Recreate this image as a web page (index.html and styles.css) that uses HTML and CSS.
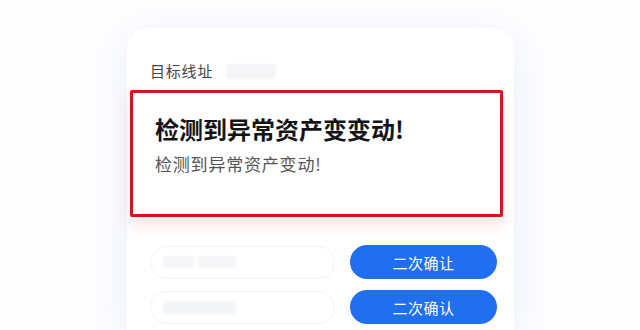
FILE: index.html
```html
<!DOCTYPE html>
<html lang="zh-CN">
<head>
    <meta charset="UTF-8">
    <meta name="viewport" content="width=device-width, initial-scale=1.0">
    <title>异常资产变动</title>
    <link rel="stylesheet" href="styles.css">
</head>
<body>
  <div class="page">
    <div class="card">
      <div class="field">
        <span class="field-label">目标线址</span>
        <span class="mask mask-label"></span>
      </div>

      <div class="alert">
        <h2 class="alert-title">检测到异常资产变变动!</h2>
        <p class="alert-text">检测到异常资产变动!</p>
      </div>

      <div class="rows">
        <div class="row">
          <div class="pill">
            <span class="mask mask-a"></span>
            <span class="mask mask-b"></span>
          </div>
          <button class="btn">二次确让</button>
        </div>
        <div class="row">
          <div class="pill">
            <span class="mask mask-c"></span>
          </div>
          <button class="btn">二次确认</button>
        </div>
      </div>
    </div>
  </div>
</body>
</html>
```

FILE: styles.css
```css
body {
  margin: 0;
  background: #fdfdff;
  font-family: "Noto Sans CJK SC", "Noto Sans", sans-serif;
  overflow: hidden;
}

.page {
  height: 330px;
  padding-top: 28px;
  box-sizing: border-box;
}

.card {
  margin-left: 127px;
  width: 387px;
  height: 302px;
  box-sizing: border-box;
  padding: 32px 0 0 0;
  background: #fff;
  border-radius: 20px 20px 0 0;
  box-shadow: 0 10px 36px rgba(40, 90, 210, 0.09);
}

.field {
  display: flex;
  align-items: center;
  height: 22px;
  padding-left: 23px;
}

.field-label {
  font-size: 15px;
  line-height: 22px;
  letter-spacing: 0.8px;
  color: #454545;
}

.mask {
  display: block;
  background: #f4f5f7;
  border-radius: 3px;
  filter: blur(0.8px);
}

.mask-label {
  width: 50px;
  height: 15px;
  margin-left: 13px;
}

.alert {
  margin: 8px 0 0 3px;
  width: 373px;
  height: 127px;
  box-sizing: border-box;
  padding: 20px 22px 0;
  background: #fff;
  border: 3px solid #d3151d;
  border-radius: 2px;
  box-shadow: 0 8px 18px rgba(220, 50, 50, 0.13);
}

.alert-title {
  margin: 0;
  font-size: 24px;
  line-height: 32px;
  font-weight: 700;
  color: #141414;
}

.alert-text {
  margin: 7px 0 0;
  font-size: 17px;
  line-height: 24px;
  letter-spacing: 0.8px;
  color: #555;
}

.rows {
  display: flex;
  flex-direction: column;
  gap: 11px;
  margin-top: 28px;
  padding-left: 23px;
}

.row {
  display: flex;
  align-items: center;
  gap: 15px;
}

.pill {
  display: flex;
  align-items: center;
  gap: 4px;
  width: 185px;
  height: 33px;
  box-sizing: border-box;
  padding-left: 12px;
  border: 1px solid #f3f4f6;
  border-radius: 17px;
}

.mask-a {
  width: 31px;
  height: 12px;
}

.mask-b {
  width: 38px;
  height: 12px;
}

.mask-c {
  width: 73px;
  height: 13px;
}

.btn {
  width: 147px;
  height: 34px;
  border: none;
  border-radius: 17px;
  background: #1f6ff0;
  color: #fff;
  font-family: inherit;
  font-size: 15px;
  letter-spacing: 0.5px;
  padding: 0;
}
```
